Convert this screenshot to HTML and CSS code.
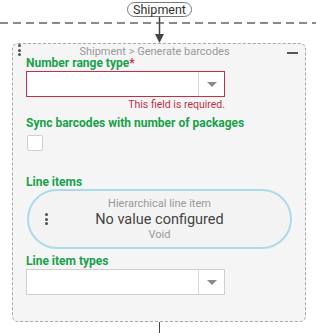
FILE: index.html
```html
<!DOCTYPE html>
<html lang="en">
<head>
    <meta charset="UTF-8">
    <meta name="viewport" content="width=device-width, initial-scale=1.0">
    <title>Generate barcodes</title>
    <link rel="stylesheet" href="styles.css">
</head>
<body>
    <div class="flow">
        <!-- Eingangsknoten -->
        <div class="node-pill">Shipment</div>
        <svg class="connector" width="316" height="26" viewBox="0 0 316 26">
            <line x1="0" y1="6" x2="316" y2="6" stroke="#8a8a8a" stroke-width="2" stroke-dasharray="8 5"/>
            <line x1="159.5" y1="0" x2="159.5" y2="18" stroke="#444" stroke-width="1.5"/>
            <polygon points="155,17 164,17 159.5,26" fill="#444"/>
        </svg>

        <!-- Aktionsblock -->
        <div class="card">
            <div class="card-head">
                <span class="drag">
                    <i></i><i></i><i></i>
                </span>
                <span class="card-title">Shipment &gt; Generate barcodes</span>
                <span class="collapse"></span>
            </div>

            <div class="field">
                <label class="label">Number range type<span class="req">*</span></label>
                <div class="select invalid">
                    <div class="select-value"></div>
                    <div class="select-arrow"><span class="caret"></span></div>
                </div>
                <div class="error">This field is required.</div>
            </div>

            <div class="field sync">
                <label class="label">Sync barcodes with number of packages</label>
                <div class="checkbox"></div>
            </div>

            <div class="field lines">
                <label class="label">Line items</label>
                <div class="line-item">
                    <span class="drag dark">
                        <i></i><i></i><i></i>
                    </span>
                    <div class="line-body">
                        <div class="line-type">Hierarchical line item</div>
                        <div class="line-value">No value configured</div>
                        <div class="line-type">Void</div>
                    </div>
                </div>
            </div>

            <div class="field types">
                <label class="label">Line item types</label>
                <div class="select">
                    <div class="select-value"></div>
                    <div class="select-arrow"><span class="caret"></span></div>
                </div>
            </div>
        </div>

        <div class="tail"></div>
    </div>
</body>
</html>
```

FILE: styles.css
```css
body { margin: 0; background: #fff; font-family: Roboto, "Liberation Sans", sans-serif; color: #333; }
.flow { width: 316px; display: flex; flex-direction: column; align-items: flex-start; }
.node-pill { align-self: center; margin: 2px 0 0 3px; height: 13px; line-height: 13px; padding: 0 5px; border: 1px solid #777; border-radius: 8px; font-size: 12.5px; color: #333; background: #fff; }
.connector { display: block; }
.card { margin-left: 12px; width: 292px; height: 277px; border: 1px dashed #a8a8a8; border-radius: 6px; background: #f5f5f5; padding: 0 0 0 13px; box-sizing: content-box; width: 279px; }
.card-head { display: flex; align-items: center; height: 12px; margin-left: -8px; }
.drag { display: flex; flex-direction: column; gap: 1.5px; width: 4px; }
.drag i { display: block; width: 3px; height: 3px; border-radius: 50%; background: #555; }
.card-title { flex: 1; text-align: center; font-size: 11px; color: #999; margin-top: 2px; }
.collapse { width: 11px; height: 2px; background: #555; margin: 6px 7px 0 0; }
.label { display: block; font-size: 12px; font-weight: bold; color: #17a24b; line-height: 14px; }
.req { color: #d92b3a; }
.field:first-of-type .label { margin-top: 0; }
.select { display: flex; width: 199px; height: 26px; margin-top: 1px; border: 1px solid #d0d0d0; box-sizing: border-box; background: #fff; }
.select.invalid { border-color: #c4304a; }
.select-value { flex: 1; }
.select-arrow { width: 25px; border-left: 1px solid #d8d8d8; display: flex; align-items: center; justify-content: center; }
.caret { width: 0; height: 0; border-left: 5px solid transparent; border-right: 5px solid transparent; border-top: 5px solid #8a8a8a; margin-top: 1px; }
.error { width: 199px; text-align: right; font-size: 10.5px; line-height: 12px; margin-top: 2px; color: #c4304a; }
.sync { margin-top: 5px; }
.checkbox { width: 16px; height: 16px; margin: 5px 0 0 1px; border: 1px solid #cfcfcf; border-radius: 2px; box-sizing: border-box; background: #fff; }
.lines { margin-top: 24px; }
.line-item { display: flex; align-items: center; margin-left: 1px; width: 265px; height: 60px; box-sizing: border-box; border: 2px solid #a9dbe9; border-radius: 30px; background: #f3f3f3; }
.line-item .drag { margin-left: 16px; }
.line-item .drag i { background: #4a4f57; }
.line-body { flex: 1; text-align: center; margin-right: 20px; }
.line-type { font-size: 11px; color: #999; line-height: 14px; }
.line-value { font-size: 14.5px; color: #444; line-height: 17px; }
.types { margin-top: 5px; }
.tail { width: 1px; height: 12px; background: #444; margin-left: 159px; }
```
